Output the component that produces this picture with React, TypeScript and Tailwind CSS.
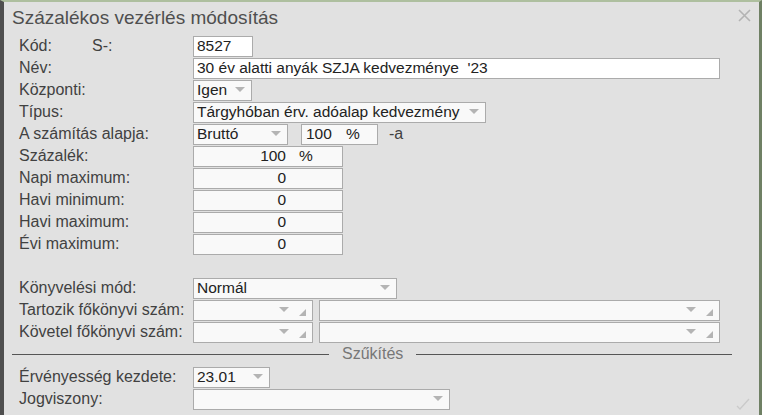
import React from 'react';

const font = { fontFamily: '"Liberation Sans", Arial, sans-serif' };

const Arrow: React.FC = () => (
  <svg width="10" height="6" viewBox="0 0 10 6" className="shrink-0">
    <path d="M0 0 L10 0 L5 5 Z" fill="#b4b4b4" />
  </svg>
);

const Corner: React.FC = () => (
  <svg width="7" height="7" viewBox="0 0 7 7" className="shrink-0">
    <path d="M7 0 L7 7 L0 7 Z" fill="#b4b4b4" />
  </svg>
);

const Box: React.FC<{ w: string; children?: React.ReactNode; className?: string }> = ({ w, children, className = '' }) => (
  <div className={`h-[21px] border border-[#ababab] bg-[#f9f9f9] flex items-center text-[15.5px] text-[#222] ${w} ${className}`}>{children}</div>
);

const Select: React.FC<{ w: string; value?: string; corner?: boolean }> = ({ w, value = '', corner }) => (
  <Box w={w} className="pl-[3px] pr-[6px]">
    <span className="flex-1 truncate">{value}</span>
    <Arrow />
    {corner && <span className="ml-[10px] mt-[4px]"><Corner /></span>}
  </Box>
);

const Row: React.FC<{ label?: React.ReactNode; children?: React.ReactNode }> = ({ label, children }) => (
  <div className="flex items-center h-[22px]">
    <div className="w-[174px] shrink-0 text-[#414141]">{label}</div>
    <div className="flex items-center">{children}</div>
  </div>
);

const NumBox: React.FC<{ value: string; unit?: string }> = ({ value, unit }) => (
  <Box w="w-[150px]">
    <span className="w-[92px] text-right">{value}</span>
    {unit && <span className="ml-[13px]">{unit}</span>}
  </Box>
);

export default function App() {
  return (
    <div style={font} className="w-[762px] h-[415px] bg-[#e1e1e1] border-l-[4px] border-l-[#4f4f4f] border-t-[2px] border-t-[#aebf9f] border-r-[3px] border-r-[#6f8064] relative overflow-hidden text-[16px] leading-none">
      <div className="h-[33px] pl-[8px] pt-[6px] text-[19px] text-[#4f4f4f]">Százalékos vezérlés módosítás</div>
      <svg width="13" height="13" viewBox="0 0 13 13" className="absolute right-[8px] top-[7px]">
        <path d="M1 1 L12 12 M12 1 L1 12" stroke="#b3b3b3" strokeWidth="1.6" />
      </svg>

      <div className="pl-[15px]">
        <Row label={<span className="flex"><span className="w-[73px]">Kód:</span><span>S-:</span></span>}>
          <Box w="w-[60px]" className="pl-[3px] bg-white">8527</Box>
        </Row>
        <Row label="Név:">
          <Box w="w-[527px]" className="pl-[3px] bg-white">30 év alatti anyák SZJA kedvezménye&nbsp;&nbsp;'23</Box>
        </Row>
        <Row label="Központi:">
          <Select w="w-[59px]" value="Igen" />
        </Row>
        <Row label="Típus:">
          <Select w="w-[293px]" value="Tárgyhóban érv. adóalap kedvezmény" />
        </Row>
        <Row label="A számítás alapja:">
          <Select w="w-[95px]" value="Bruttó" />
          <Box w="w-[77px]" className="ml-[13px] pl-[4px]">
            <span>100</span>
            <span className="ml-[14px]">%</span>
          </Box>
          <span className="ml-[11px] text-[#414141]">-a</span>
        </Row>
        <Row label="Százalék:"><NumBox value="100" unit="%" /></Row>
        <Row label="Napi maximum:"><NumBox value="0" /></Row>
        <Row label="Havi minimum:"><NumBox value="0" /></Row>
        <Row label="Havi maximum:"><NumBox value="0" /></Row>
        <Row label="Évi maximum:"><NumBox value="0" /></Row>
        <Row />
        <Row label="Könyvelési mód:">
          <Select w="w-[204px]" value="Normál" />
        </Row>
        <Row label="Tartozik főkönyvi szám:">
          <Select w="w-[120px]" corner />
          <div className="ml-[6px]"><Select w="w-[401px]" corner /></div>
        </Row>
        <Row label="Követel főkönyvi szám:">
          <Select w="w-[120px]" corner />
          <div className="ml-[6px]"><Select w="w-[401px]" corner /></div>
        </Row>
      </div>

      <div className="flex items-center h-[22px] pl-[8px] pr-[27px]">
        <div className="w-[317px] h-px bg-[#555]" />
        <span className="px-[13px] text-[#777]">Szűkítés</span>
        <div className="flex-1 h-px bg-[#555]" />
      </div>

      <div className="pl-[15px] pt-[1px]">
        <Row label="Érvényesség kezdete:">
          <Select w="w-[77px]" value="23.01" />
        </Row>
        <Row label="Jogviszony:">
          <Select w="w-[257px]" />
        </Row>
      </div>

      <svg width="16" height="14" viewBox="0 0 16 14" className="absolute right-[8px] bottom-[4px]">
        <path d="M2 9 L5 12 L14 2" stroke="#cacaca" strokeWidth="1.3" fill="none" />
      </svg>
    </div>
  );
}
